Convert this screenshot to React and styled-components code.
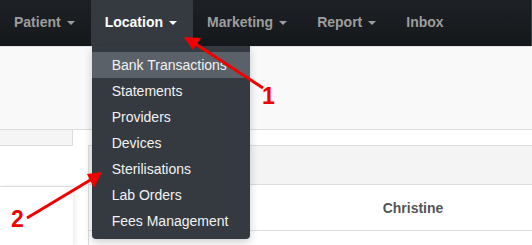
import React from "react";
import styled, { createGlobalStyle } from "styled-components";

const GlobalStyle = createGlobalStyle`
    html, body {
        margin: 0;
        padding: 0;
        background: #ffffff;
    }
    body {
        font-family: "Liberation Sans", Arial, sans-serif;
    }
`;

const navItems = [
    { label: "Patient", caret: true },
    { label: "Location", caret: true, active: true },
    { label: "Marketing", caret: true },
    { label: "Report", caret: true },
    { label: "Inbox" },
];

const locationMenu = [
    "Bank Transactions",
    "Statements",
    "Providers",
    "Devices",
    "Sterilisations",
    "Lab Orders",
    "Fees Management",
];

const App = () => {
    return (
        <Page>
            <GlobalStyle />
            <NavBar>
                {navItems.map((item) => (
                    <NavItem key={item.label} active={item.active} caret={item.caret}>
                        {item.label}
                        {item.caret && <Caret />}
                        {item.active && (
                            <Dropdown>
                                {locationMenu.map((entry, i) => (
                                    <MenuItem key={entry} hover={i === 0}>
                                        {entry}
                                    </MenuItem>
                                ))}
                            </Dropdown>
                        )}
                    </NavItem>
                ))}
            </NavBar>
            <Header />
            <Body>
                <Side>
                    <SideTab />
                    <SideCard />
                </Side>
                <Main>
                    <Panel>
                        <PanelHead />
                        <Row>
                            <Cell />
                            <Cell strong>Christine</Cell>
                        </Row>
                    </Panel>
                </Main>
            </Body>
            <Marks width="532" height="245" viewBox="0 0 532 245">
                <line x1="263" y1="88" x2="194" y2="43" stroke="#f20000" strokeWidth="3" />
                <polygon points="184,37 201,38 193,50" fill="#f20000" />
                <line x1="27" y1="218" x2="92" y2="179" stroke="#f20000" strokeWidth="3" />
                <polygon points="102,172 94,188 87,174" fill="#f20000" />
            </Marks>
            <Label x={262} y={85}>1</Label>
            <Label x={11} y={208}>2</Label>
        </Page>
    );
};

const Page = styled.div`
    position: relative;
    width: 532px;
    height: 245px;
    overflow: hidden;
    background: #ffffff;
`;

const NavBar = styled.nav`
    display: flex;
    height: 46px;
    background: linear-gradient(#1d2125, #15181b);
    border-right: 1px solid #3a3f44;
    box-sizing: border-box;
`;

const NavItem = styled.div`
    position: relative;
    display: flex;
    align-items: center;
    padding: 0 ${(p) => (p.caret ? "16px" : "14px")} 2px 14px;
    font-size: 14px;
    font-weight: bold;
    color: ${(p) => (p.active ? "#ffffff" : "#9d9d9d")};
    background: ${(p) => (p.active ? "#353a40" : "transparent")};
    cursor: pointer;
`;

const Caret = styled.span`
    width: 0;
    height: 0;
    margin-left: 6px;
    margin-top: 1px;
    border-top: 4px solid currentColor;
    border-left: 4px solid transparent;
    border-right: 4px solid transparent;
`;

const Dropdown = styled.div`
    position: absolute;
    z-index: 5;
    top: 46px;
    left: 1px;
    width: 158px;
    padding: 6px 0 5px;
    background: #343a40;
    border-radius: 0 0 4px 4px;
    box-shadow: 0 3px 8px rgba(0, 0, 0, 0.2);
`;

const MenuItem = styled.div`
    height: 26px;
    line-height: 26px;
    padding-left: 20px;
    font-size: 14px;
    font-weight: normal;
    color: #f2f2f2;
    white-space: nowrap;
    background: ${(p) => (p.hover ? "#5b6168" : "transparent")};
`;

const Header = styled.div`
    height: 82px;
    background: #f9f9f9;
    border-top: 1px solid #e4e4e4;
    border-bottom: 1px solid #dcdcdc;
`;

const Body = styled.div`
    display: flex;
    height: 115px;
`;

const Side = styled.div`
    display: flex;
    flex-direction: column;
    width: 73px;
`;

const SideTab = styled.div`
    height: 15px;
    background: #f5f5f5;
    border-right: 1px solid #dcdcdc;
    border-bottom: 1px solid #dcdcdc;
`;

const SideCard = styled.div`
    flex: 1;
    margin-top: 40px;
    border-top: 1px solid #dcdcdc;
    box-shadow: 2px 0 4px rgba(0, 0, 0, 0.08);
`;

const Main = styled.div`
    flex: 1;
    padding: 15px 0 0 15px;
`;

const Panel = styled.div`
    border-top: 1px solid #dcdcdc;
    border-left: 1px solid #dcdcdc;
    height: 100%;
`;

const PanelHead = styled.div`
    height: 38px;
    background: #f4f4f4;
    border-bottom: 1px solid #dcdcdc;
`;

const Row = styled.div`
    display: grid;
    grid-template-columns: 205px 1fr;
    height: 45px;
    border-bottom: 1px solid #dcdcdc;
`;

const Cell = styled.div`
    display: flex;
    align-items: center;
    justify-content: center;
    font-size: 14px;
    font-weight: ${(p) => (p.strong ? "bold" : "normal")};
    color: #555555;
`;

const Marks = styled.svg`
    position: absolute;
    top: 0;
    left: 0;
    z-index: 10;
    pointer-events: none;
`;

const Label = styled.span`
    position: absolute;
    z-index: 10;
    left: ${(p) => p.x}px;
    top: ${(p) => p.y}px;
    font-size: 23px;
    font-weight: bold;
    line-height: 1;
    color: #f20000;
`;

export default App;
